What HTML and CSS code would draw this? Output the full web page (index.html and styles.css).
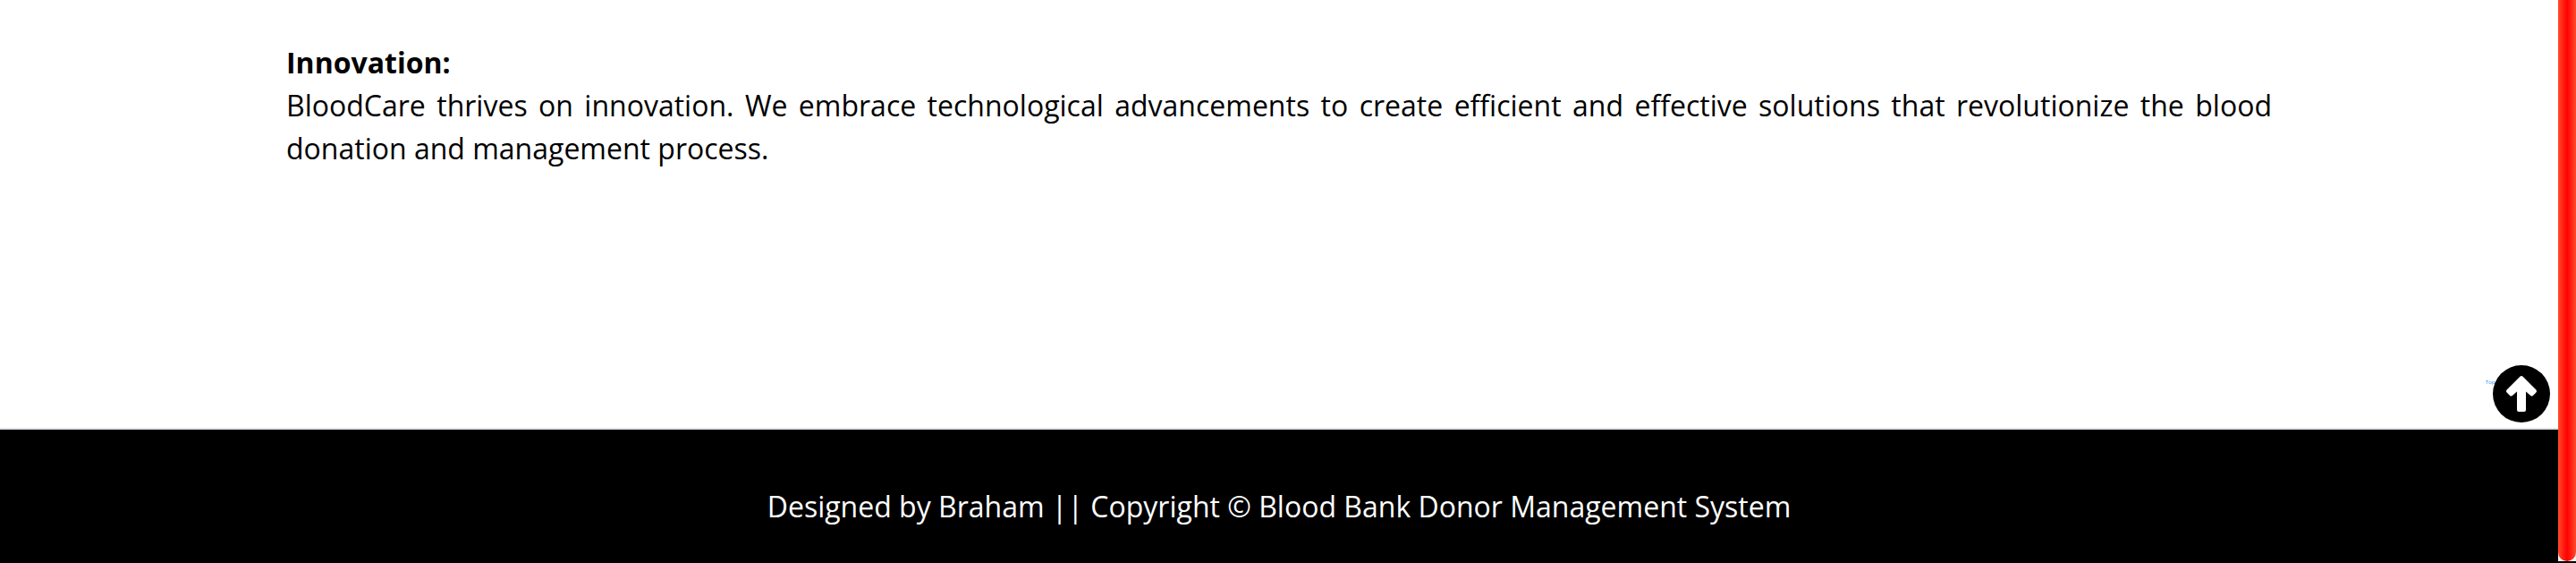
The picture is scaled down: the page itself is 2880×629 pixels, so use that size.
FILE: index.html
```
<!DOCTYPE html>
<html lang="en">
<head>
<meta charset="utf-8">
<title>BloodCare</title>
<link rel="stylesheet" href="styles.css">
</head>
<body>
<div class="page">
<main class="content">
<h2 class="heading">Innovation:</h2>
<p class="text">BloodCare thrives on innovation. We embrace technological advancements to create efficient and effective solutions that revolutionize the blood donation and management process.</p>
</main>
<footer class="footer">Designed by Braham || Copyright © Blood Bank Donor Management System</footer>
</div>
<a class="to-top" href="#"><span class="to-top-label">Top</span><svg class="to-top-icon" viewBox="0 0 64 64" aria-hidden="true"><circle class="disc" cx="32" cy="32" r="32"/><path class="arrow" d="M32 14L47 29L43.500 32.500L35 25V50H29V25L20.500 32.500L17 29Z"/></svg></a>
<div class="scrollbar"><div class="thumb"></div></div>
</body>
</html>
```
FILE: styles.css
```
* { box-sizing: border-box; }
body {
  margin: 0;
  min-height: 100vh;
  display: flex;
  background: #fff;
  color: #000;
  font: 32px/48px "Open Sans", sans-serif;
}
.page { flex: 1; display: flex; flex-direction: column; }
.content { flex: 1; padding: 46px 320px 0; }
.heading { margin: 0; font-size: 32px; font-weight: 700; }
.text { margin: 0; text-align: justify; }
.footer {
  padding: 62px 0 39px;
  border-top: 2px solid #dee2e6;
  background: #000;
  color: #fff;
  text-align: center;
}
.scrollbar {
  width: 20px;
  display: flex;
  background: #f4f4f4;
  border-bottom: 2px solid #000;
}
.thumb {
  flex: 1;
  border-radius: 0 0 10px 10px;
  background: linear-gradient(90deg, #ff4b2b, #ff0000 50%, #ff4b2b);
}
.to-top {
  position: fixed;
  right: 29px;
  bottom: 157px;
  color: #2e8bff;
  font-size: 6px;
  line-height: 8px;
  text-decoration: none;
}
.to-top-label { position: absolute; left: -8px; top: 15px; }
.to-top-icon { position: relative; display: block; width: 64px; height: 64px; }
.disc { fill: #000; }
.arrow { fill: #fff; stroke: #fff; stroke-width: 4; stroke-linejoin: round; }
```
